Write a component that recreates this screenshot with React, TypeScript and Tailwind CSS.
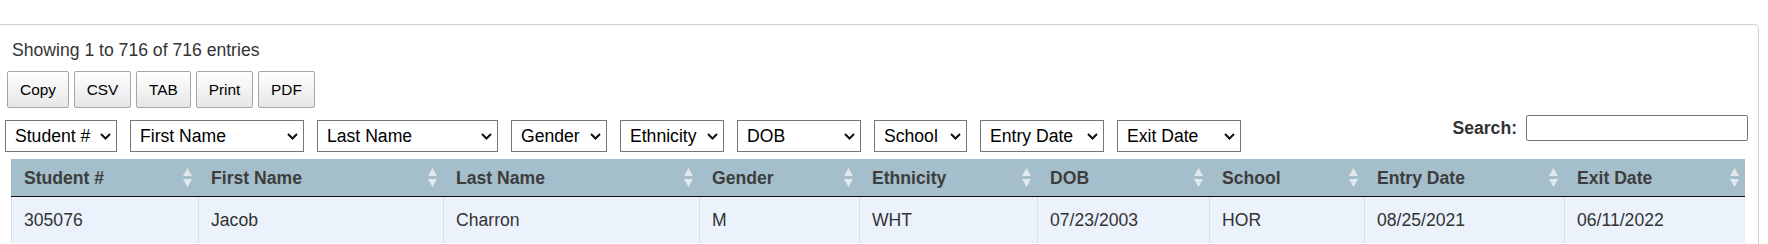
import React from "react";

const columns = [
  { label: "Student #", width: 187 },
  { label: "First Name", width: 245 },
  { label: "Last Name", width: 256 },
  { label: "Gender", width: 160 },
  { label: "Ethnicity", width: 178 },
  { label: "DOB", width: 172 },
  { label: "School", width: 155 },
  { label: "Entry Date", width: 200 },
  { label: "Exit Date", width: 181 },
];

const filters = [
  { label: "Student #", width: 112 },
  { label: "First Name", width: 174 },
  { label: "Last Name", width: 181 },
  { label: "Gender", width: 96 },
  { label: "Ethnicity", width: 104 },
  { label: "DOB", width: 124 },
  { label: "School", width: 93 },
  { label: "Entry Date", width: 124 },
  { label: "Exit Date", width: 124 },
];

const row = ["305076", "Jacob", "Charron", "M", "WHT", "07/23/2003", "HOR", "08/25/2021", "06/11/2022"];

const buttons = [
  { label: "Copy", width: 62 },
  { label: "CSV", width: 57 },
  { label: "TAB", width: 55 },
  { label: "Print", width: 57 },
  { label: "PDF", width: 57 },
];

function SortIcon() {
  return (
    <svg width="11" height="19" viewBox="0 0 11 19" className="shrink-0">
      <polygon points="5.5,0 10,8 1,8" fill="#e2e8ec" />
      <polygon points="1,11 10,11 5.5,19" fill="#e2e8ec" />
    </svg>
  );
}

function FilterSelect({ label, width }: { label: string; width: number }) {
  return (
    <div className="relative h-[32px] shrink-0" style={{ width }}>
      <select
        defaultValue={label}
        className="h-full w-full appearance-none rounded-none border border-[#767676] bg-white pl-[9px] text-[17.6px] leading-[20px] text-black outline-none"
      >
        <option>{label}</option>
      </select>
      <svg
        width="11"
        height="7"
        viewBox="0 0 11 7"
        className="pointer-events-none absolute right-[6px] top-[13px]"
      >
        <polyline points="1,1 5.5,5.5 10,1" fill="none" stroke="#111" strokeWidth="2" />
      </svg>
    </div>
  );
}

export default function App() {
  const grid = columns.map((c) => `${c.width}px`).join(" ");
  return (
    <div className="h-[244px] w-[1768px] overflow-hidden bg-white font-['Liberation_Sans',Arial,sans-serif]">
      <div className="mt-[24px] h-[220px] w-[1759px] rounded-tr-[5px] border-t border-r border-[#d0d0d0] pt-[15px]">
        <div className="pl-[12px] text-[17.6px] leading-[20px] text-[#333]">
          Showing 1 to 716 of 716 entries
        </div>

        <div className="mt-[11px] flex gap-[5px] pl-[7px]">
          {buttons.map((b) => (
            <button
              key={b.label}
              style={{ width: b.width }}
              className="h-[37px] rounded-[2px] border border-[#a6a6a6] bg-gradient-to-b from-white to-[#e6e6e6] text-[15.4px] text-black"
            >
              {b.label}
            </button>
          ))}
        </div>

        <div className="mt-[5px] flex h-[39px] items-start justify-between pl-[5px] pr-[10px]">
          <div className="flex gap-[13px] pt-[7px]">
            {filters.map((f) => (
              <FilterSelect key={f.label} label={f.label} width={f.width} />
            ))}
          </div>
          <div className="flex items-center gap-[9px] pt-[2px]">
            <span className="text-[17.6px] font-bold leading-[20px] text-[#333]">Search:</span>
            <input
              type="text"
              className="h-[26px] w-[222px] rounded-[2px] border border-[#767676] bg-white outline-none"
            />
          </div>
        </div>

        <div className="ml-[11px] mt-[7px] w-[1734px] text-[17.6px] leading-[20px]">
          <div
            className="grid h-[38px] border-b border-[#111] bg-[#a4bfcb]"
            style={{ gridTemplateColumns: grid }}
          >
            {columns.map((c) => (
              <div
                key={c.label}
                className="flex items-center justify-between pl-[13px] pr-[5px] font-bold text-[#3d3d3d]"
              >
                <span>{c.label}</span>
                <SortIcon />
              </div>
            ))}
          </div>
          <div className="grid bg-[#ebf2fc]" style={{ gridTemplateColumns: grid }}>
            {row.map((v, i) => (
              <div
                key={i}
                className="border-l border-[#dadde2] py-[13px] pl-[12px] text-[#333]"
              >
                {v}
              </div>
            ))}
          </div>
        </div>
      </div>
    </div>
  );
}
